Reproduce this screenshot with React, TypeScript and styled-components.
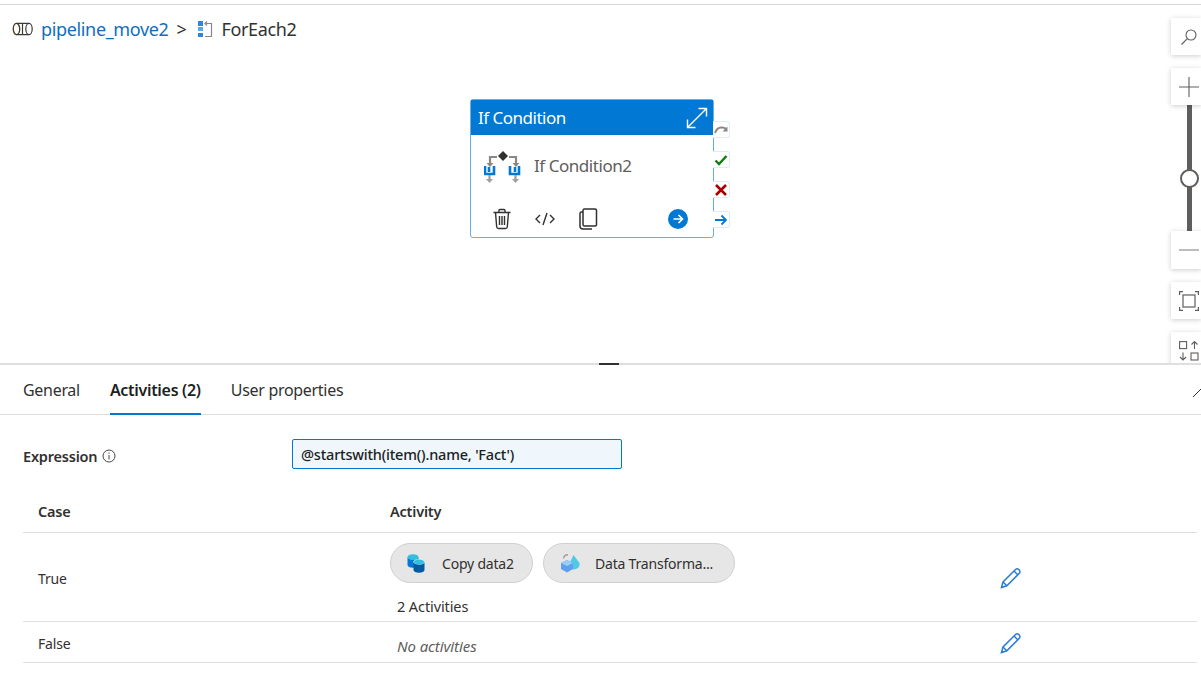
import { FC } from "react";
import styled, { createGlobalStyle } from "styled-components";

const Global = createGlobalStyle`
  html, body { margin: 0; padding: 0; background: #fff; overflow: hidden; }
  body { font-family: "Noto Sans", "Open Sans", "Liberation Sans", sans-serif; color: #252423; }
`;

const PipelineIcon = () => (
  <svg width="22" height="14" viewBox="0 0 22 14" fill="none" stroke="#3b3a39" strokeWidth="1.2">
    <ellipse cx="4.5" cy="7" rx="3.2" ry="5.6" stroke="#b8860b" />
    <ellipse cx="4.5" cy="7" rx="3.2" ry="5.6" />
    <ellipse cx="17" cy="7" rx="3.2" ry="5.6" />
    <path d="M5 1.4h12M5 12.6h12M10.5 1.6v10.8" />
  </svg>
);

const ForEachIcon = () => (
  <svg width="16" height="18" viewBox="0 0 16 18">
    <rect x="1" y="1" width="5" height="5" fill="#2b88d8" />
    <rect x="1" y="7" width="5" height="4" fill="#2b88d8" opacity=".75" />
    <rect x="1" y="13" width="5" height="4" fill="#2b88d8" />
    <path d="M8 3.5h6.5v13H8M10 1.5l-2 2 2 2" fill="none" stroke="#8a8886" strokeWidth="1.2" />
  </svg>
);

const ExpandIcon = () => (
  <svg width="22" height="22" viewBox="0 0 22 22" fill="none" stroke="#fff" strokeWidth="1.4">
    <path d="M2 20L20 2M12.5 1.5h8v8M1.5 12.5v8h8" />
  </svg>
);

const IfIcon = () => (
  <svg width="38" height="38" viewBox="0 0 38 38">
    <path d="M6 20v-9h7M32 20v-9h-7" fill="none" stroke="#8a8886" strokeWidth="2.2" />
    <path d="M2.5 17h7l-3.500 4zM28.500 17h7l-3.500 4z" fill="#8a8886" />
    <path d="M19 5l5 5-5 5-5-5z" fill="#323130" />
    <path d="M2 20v8h9v-8M27 20v8h9v-8" fill="none" stroke="#0078d4" strokeWidth="2.6" transform="translate(-1 0)" />
    <path d="M6 21v5M32 21v5" stroke="#0078d4" strokeWidth="2.6" transform="translate(-1 0)" />
    <path d="M5.500 29v5M31.500 29v5" stroke="#a19f9d" strokeWidth="2.2" />
    <path d="M2 33h7l-3.500 4zM28 33h7l-3.500 4z" fill="#a19f9d" />
  </svg>
);

const TrashIcon = () => (
  <svg width="20" height="22" viewBox="0 0 20 22" fill="none" stroke="#323130" strokeWidth="1.4">
    <path d="M1.500 4.500h17M7 4.500V2.500q0-1 1-1h4q1 0 1 1v2M3.500 4.500l1.200 14.500q.2 1.500 1.800 1.500h7q1.600 0 1.800-1.500l1.200-14.500M7.500 8v9M10 8v9M12.500 8v9" />
  </svg>
);

const CodeIcon = () => (
  <svg width="20" height="14" viewBox="0 0 20 14" fill="none" stroke="#323130" strokeWidth="1.4">
    <path d="M5 3L1 7l4 4M15 3l4 4-4 4M12 1L8 13" />
  </svg>
);

const CopyIcon = () => (
  <svg width="20" height="22" viewBox="0 0 20 22" fill="none" stroke="#323130" strokeWidth="1.5">
    <rect x="5" y="1" width="13.500" height="17" rx="1.500" />
    <path d="M5 4H3.500Q2 4 2 5.500V18q0 3 3 3h9" />
  </svg>
);

const GoIcon = () => (
  <svg width="20" height="20" viewBox="0 0 20 20">
    <circle cx="10" cy="10" r="10" fill="#0078d4" />
    <path d="M5.500 10h8.500M10.500 6l4 4-4 4" fill="none" stroke="#fff" strokeWidth="1.700" />
  </svg>
);

const SkipGlyph = () => (
  <svg width="14" height="10" viewBox="0 0 14 10" fill="none">
    <path d="M1 8Q3 2 8 2.500T12 6" stroke="#8a8886" strokeWidth="2" />
    <path d="M8.500 6.500h5V1.500z" fill="#8a8886" />
  </svg>
);

const CheckGlyph = () => (
  <svg width="14" height="12" viewBox="0 0 14 12" fill="none">
    <path d="M1.500 6.500l3.500 3.500 7.500-8" stroke="#107c10" strokeWidth="2.400" />
  </svg>
);

const CrossGlyph = () => (
  <svg width="12" height="12" viewBox="0 0 12 12" fill="none">
    <path d="M1 1l10 10M11 1L1 11" stroke="#a80000" strokeWidth="2.600" />
  </svg>
);

const ArrowGlyph = () => (
  <svg width="12" height="12" viewBox="0 0 12 12" fill="none">
    <path d="M0 6h10.500M6.500 1.500L11 6l-4.500 4.500" stroke="#0078d4" strokeWidth="1.800" />
  </svg>
);

const SearchIcon = () => (
  <svg width="18" height="18" viewBox="0 0 18 18" fill="none" stroke="#605e5c" strokeWidth="1.100">
    <circle cx="11" cy="7" r="5" />
    <path d="M7.300 10.700L1.500 16.500" />
  </svg>
);

const PlusIcon = () => (
  <svg width="20" height="20" viewBox="0 0 20 20" fill="none" stroke="#605e5c" strokeWidth="1.100">
    <path d="M0 10h20M10 0v20" />
  </svg>
);

const MinusIcon = () => (
  <svg width="20" height="4" viewBox="0 0 20 4" fill="none" stroke="#8a8886" strokeWidth="1.100">
    <path d="M0 2h20" />
  </svg>
);

const FitIcon = () => (
  <svg width="20" height="20" viewBox="0 0 20 20" fill="none" stroke="#605e5c" strokeWidth="1.200">
    <rect x="4" y="4" width="12" height="12" />
    <path d="M.6 4V.6H4M16 .6h3.400V4M.6 16v3.400H4M16 19.400h3.400V16" />
  </svg>
);

const ArrangeIcon = () => (
  <svg width="20" height="20" viewBox="0 0 20 20" fill="none" stroke="#605e5c" strokeWidth="1.100">
    <rect x=".6" y=".6" width="7" height="7" />
    <rect x="12" y="12" width="7" height="7" />
    <path d="M15.500 8V.8M12.500 3.500l3-3 3 3M4 11.500v7.500M1 16l3 3 3-3" />
  </svg>
);

const InfoIcon = () => (
  <svg width="14" height="14" viewBox="0 0 14 14" fill="none" stroke="#323130" strokeWidth=".9">
    <circle cx="7" cy="7" r="6" />
    <path d="M7 6v4.500M7 3.500v1.200" />
  </svg>
);

const PencilIcon = () => (
  <svg width="22" height="22" viewBox="0 0 22 22" fill="none" stroke="#2b7cd3" strokeWidth="1.500">
    <path d="M1.500 20.500l1.500-5.500L15.500 2.500q1.500-1.200 3-.2l1 1q1 1.500-.2 3L6.800 18.800z" />
    <path d="M3 15l4 4M14 4l4 4" />
  </svg>
);

const CopyDataIcon = () => (
  <svg width="18" height="20" viewBox="0 0 18 20">
    <ellipse cx="6" cy="4" rx="5.500" ry="2.800" fill="#32bedd" />
    <path d="M.5 4v8c0 1.600 2.400 2.800 5.500 2.800s5.500-1.200 5.500-2.800V4c0 1.600-2.400 2.800-5.500 2.800S.5 5.600.5 4z" fill="#0078d4" />
    <ellipse cx="12" cy="9" rx="5.500" ry="2.800" fill="#32bedd" stroke="#fff" strokeWidth=".5" />
    <path d="M6.500 9v8c0 1.600 2.400 2.800 5.500 2.800s5.500-1.200 5.500-2.800V9c0 1.600-2.400 2.800-5.500 2.800S6.500 10.600 6.500 9z" fill="#005ba1" />
  </svg>
);

const TransformIcon = () => (
  <svg width="21" height="20" viewBox="0 0 21 20">
    <path d="M13.500 2l6 8q1 5-5 6.500-5 0-6-4z" fill="#50c8e8" />
    <path d="M7 7l6 3v6l-6 3.500L1 16v-6z" fill="#5ea0ef" />
    <path d="M7 7l6 3-6 3-6-3z" fill="#9ccbf5" />
    <path d="M3.500 5.500Q4 1.800 8 1.800" fill="none" stroke="#a19f9d" strokeWidth="1.400" />
  </svg>
);

const Page = styled.div`
  width: 1201px;
  height: 688px;
  padding-top: 4px;
  box-sizing: border-box;
  overflow: hidden;
`;

const Canvas = styled.section`
  position: relative;
  height: 359px;
  border-top: 1px solid #d6d6d6;
  box-sizing: border-box;
  overflow: hidden;
`;

const Breadcrumb = styled.nav`
  display: flex;
  align-items: center;
  height: 48px;
  padding-left: 12px;
  font-size: 18px;
  letter-spacing: -0.35px;
`;

const CrumbLink = styled.a`
  color: #106ebe;
  margin-left: 7px;
`;

const CrumbSeparator = styled.span`
  margin: 0 10px 0 8px;
  color: #323130;
`;

const CrumbCurrent = styled.span`
  margin-left: 9px;
  color: #323130;
`;

const Node = styled.div`
  position: absolute;
  left: 470px;
  top: 94px;
  width: 244px;
  height: 139px;
  display: flex;
  flex-direction: column;
  box-sizing: border-box;
  border: 1px solid #69afe5;
  border-radius: 3px;
  background: #fff;
`;

const NodeHeader = styled.header`
  height: 35px;
  flex: none;
  display: flex;
  align-items: center;
  justify-content: space-between;
  padding: 0 5px 0 7px;
  background: #0078d4;
  color: #fff;
  font-size: 17px;
  letter-spacing: -0.5px;
`;

const NodeBody = styled.div`
  flex: 1;
  display: flex;
  align-items: center;
  gap: 12px;
  padding: 0 0 6px 13px;
  font-size: 17px;
  letter-spacing: -0.45px;
  color: #605e5c;
`;

const NodeActions = styled.div`
  height: 36px;
  flex: none;
  display: flex;
  align-items: center;
  padding: 0 25px 0 21px;
`;

const ActionSlot = styled.span<{ $width: number }>`
  display: flex;
  width: ${(p) => p.$width}px;
`;

const ActionSpacer = styled.span`
  flex: 1;
`;

const Ports = styled.div`
  position: absolute;
  left: 713px;
  top: 116px;
  display: flex;
  flex-direction: column;
  gap: 13px;
`;

const Port = styled.span`
  width: 17px;
  height: 17px;
  display: flex;
  align-items: center;
  justify-content: center;
  box-sizing: border-box;
  border: 1px solid #deecf9;
  border-left: none;
  border-radius: 0 3px 3px 0;
  background: #fff;
`;

const ZoomBar = styled.div`
  position: absolute;
  top: 0;
  right: 0;
  width: 30px;
  height: 100%;
  display: flex;
  flex-direction: column;
  align-items: center;
`;

const ZoomButton = styled.button<{ $top: number; $height: number }>`
  width: 30px;
  height: ${(p) => p.$height}px;
  margin-top: ${(p) => p.$top}px;
  flex: none;
  padding: 0 0 0 6px;
  display: flex;
  align-items: center;
  justify-content: center;
  border: none;
  background: #fff;
  box-shadow: 0 1px 5px rgba(0, 0, 0, 0.2);
  position: relative;
  z-index: 1;
`;

const ZoomTrack = styled.div`
  position: relative;
  width: 5px;
  height: 126px;
  margin-left: 7px;
  flex: none;
  background: #605e5c;
`;

const ZoomThumb = styled.span`
  position: absolute;
  left: -7px;
  top: 64px;
  width: 19px;
  height: 19px;
  box-sizing: border-box;
  border: 2px solid #605e5c;
  border-radius: 50%;
  background: #fff;
`;

const Panel = styled.section`
  position: relative;
  border-top: 2px solid #e1dfdd;
`;

const Handle = styled.span`
  position: absolute;
  top: -2px;
  left: 599px;
  width: 20px;
  height: 2px;
  background: #323130;
`;

const CollapseMark = styled.span`
  position: absolute;
  top: 22px;
  right: -2px;
  width: 10px;
  height: 10px;
  display: flex;
`;

const Tabs = styled.div`
  display: flex;
  height: 49px;
  gap: 30px;
  padding-left: 23px;
  border-bottom: 1px solid #e1dfdd;
`;

const Tab = styled.div<{ $active?: boolean }>`
  display: flex;
  align-items: center;
  height: 50px;
  box-sizing: border-box;
  padding-top: 2px;
  font-size: 16px;
  letter-spacing: -0.3px;
  font-weight: ${(p) => (p.$active ? 600 : 400)};
  color: ${(p) => (p.$active ? "#201f1e" : "#323130")};
  border-bottom: 2px solid ${(p) => (p.$active ? "#0078d4" : "transparent")};
`;

const Content = styled.div`
  padding: 24px 4px 0 23px;
`;

const ExpressionRow = styled.div`
  display: grid;
  grid-template-columns: 269px 330px;
  align-items: center;
  height: 30px;
`;

const ExpressionLabel = styled.label`
  display: flex;
  align-items: center;
  gap: 5px;
  padding-top: 4px;
  font-size: 14.500px;
  font-weight: 600;
  letter-spacing: -0.2px;
  color: #323130;
`;

const ExpressionInput = styled.div`
  height: 30px;
  box-sizing: border-box;
  padding: 0 8px;
  display: flex;
  align-items: center;
  background: #eff6fc;
  border: 1px solid #0078d4;
  border-radius: 2px;
  font-size: 14.500px;
  font-weight: 500;
  letter-spacing: -0.2px;
  color: #201f1e;
`;

const Table = styled.div`
  margin-top: 20px;
`;

const Row = styled.div<{ $height: number }>`
  display: grid;
  grid-template-columns: 367px 610px 1fr;
  height: ${(p) => p.$height}px;
  border-bottom: 1px solid #e1dfdd;
  box-sizing: border-box;
`;

const HeaderCell = styled.div`
  display: flex;
  align-items: center;
  font-size: 14.500px;
  font-weight: 600;
  letter-spacing: -0.2px;
  color: #323130;
`;

const CaseHeaderCell = styled(HeaderCell)`
  padding-left: 15px;
`;

const CaseCell = styled.div`
  display: flex;
  align-items: center;
  padding: 2px 0 0 15px;
  font-size: 14px;
  letter-spacing: -0.2px;
  color: #323130;
`;

const ActivityCell = styled.div`
  padding-top: 10px;
`;

const Chips = styled.div`
  display: flex;
  gap: 10px;
`;

const Chip = styled.div<{ $width: number }>`
  width: ${(p) => p.$width}px;
  height: 40px;
  box-sizing: border-box;
  display: flex;
  align-items: center;
  padding-left: 16px;
  background: #e6e6e6;
  border: 1px solid #d2d0ce;
  border-radius: 20px;
  font-size: 14px;
  letter-spacing: -0.2px;
  color: #323130;
`;

const ChipLabel = styled.span<{ $gap: number }>`
  margin-left: ${(p) => p.$gap}px;
`;

const ActivityCount = styled.div`
  margin: 13px 0 0 7px;
  font-size: 14.500px;
  letter-spacing: -0.1px;
  color: #323130;
`;

const EmptyCell = styled.div`
  padding: 14px 0 0 7px;
  font-size: 15px;
  font-style: italic;
  letter-spacing: -0.1px;
  color: #605e5c;
`;

const EditCell = styled.div`
  display: flex;
  align-items: center;
  padding-top: 2px;
`;

const App: FC = () => (
  <Page>
    <Global />
    <Canvas>
      <Breadcrumb>
        <PipelineIcon />
        <CrumbLink>pipeline_move2</CrumbLink>
        <CrumbSeparator>&gt;</CrumbSeparator>
        <ForEachIcon />
        <CrumbCurrent>ForEach2</CrumbCurrent>
      </Breadcrumb>

      <Node>
        <NodeHeader>
          If Condition
          <ExpandIcon />
        </NodeHeader>
        <NodeBody>
          <IfIcon />
          If Condition2
        </NodeBody>
        <NodeActions>
          <ActionSlot $width={43}><TrashIcon /></ActionSlot>
          <ActionSlot $width={43}><CodeIcon /></ActionSlot>
          <ActionSlot $width={20}><CopyIcon /></ActionSlot>
          <ActionSpacer />
          <GoIcon />
        </NodeActions>
      </Node>
      <Ports>
        <Port><SkipGlyph /></Port>
        <Port><CheckGlyph /></Port>
        <Port><CrossGlyph /></Port>
        <Port><ArrowGlyph /></Port>
      </Ports>

      <ZoomBar>
        <ZoomButton $top={13} $height={37}><SearchIcon /></ZoomButton>
        <ZoomButton $top={13} $height={37}><PlusIcon /></ZoomButton>
        <ZoomTrack><ZoomThumb /></ZoomTrack>
        <ZoomButton $top={0} $height={38}><MinusIcon /></ZoomButton>
        <ZoomButton $top={13} $height={37}><FitIcon /></ZoomButton>
        <ZoomButton $top={13} $height={37}><ArrangeIcon /></ZoomButton>
      </ZoomBar>
    </Canvas>

    <Panel>
      <Handle />
      <CollapseMark>
        <svg width="10" height="10" viewBox="0 0 10 10">
          <path d="M0 10L10 0" stroke="#323130" strokeWidth="1" />
        </svg>
      </CollapseMark>
      <Tabs>
        <Tab>General</Tab>
        <Tab $active>Activities (2)</Tab>
        <Tab>User properties</Tab>
      </Tabs>
      <Content>
        <ExpressionRow>
          <ExpressionLabel>
            Expression <InfoIcon />
          </ExpressionLabel>
          <ExpressionInput>@startswith(item().name, 'Fact')</ExpressionInput>
        </ExpressionRow>

        <Table>
          <Row $height={44}>
            <CaseHeaderCell>Case</CaseHeaderCell>
            <HeaderCell>Activity</HeaderCell>
          </Row>
          <Row $height={89}>
            <CaseCell>True</CaseCell>
            <ActivityCell>
              <Chips>
                <Chip $width={143}>
                  <CopyDataIcon />
                  <ChipLabel $gap={17}>Copy data2</ChipLabel>
                </Chip>
                <Chip $width={192}>
                  <TransformIcon />
                  <ChipLabel $gap={14}>Data Transforma...</ChipLabel>
                </Chip>
              </Chips>
              <ActivityCount>2 Activities</ActivityCount>
            </ActivityCell>
            <EditCell><PencilIcon /></EditCell>
          </Row>
          <Row $height={41}>
            <CaseCell>False</CaseCell>
            <EmptyCell>No activities</EmptyCell>
            <EditCell><PencilIcon /></EditCell>
          </Row>
        </Table>
      </Content>
    </Panel>
  </Page>
);

export default App;
